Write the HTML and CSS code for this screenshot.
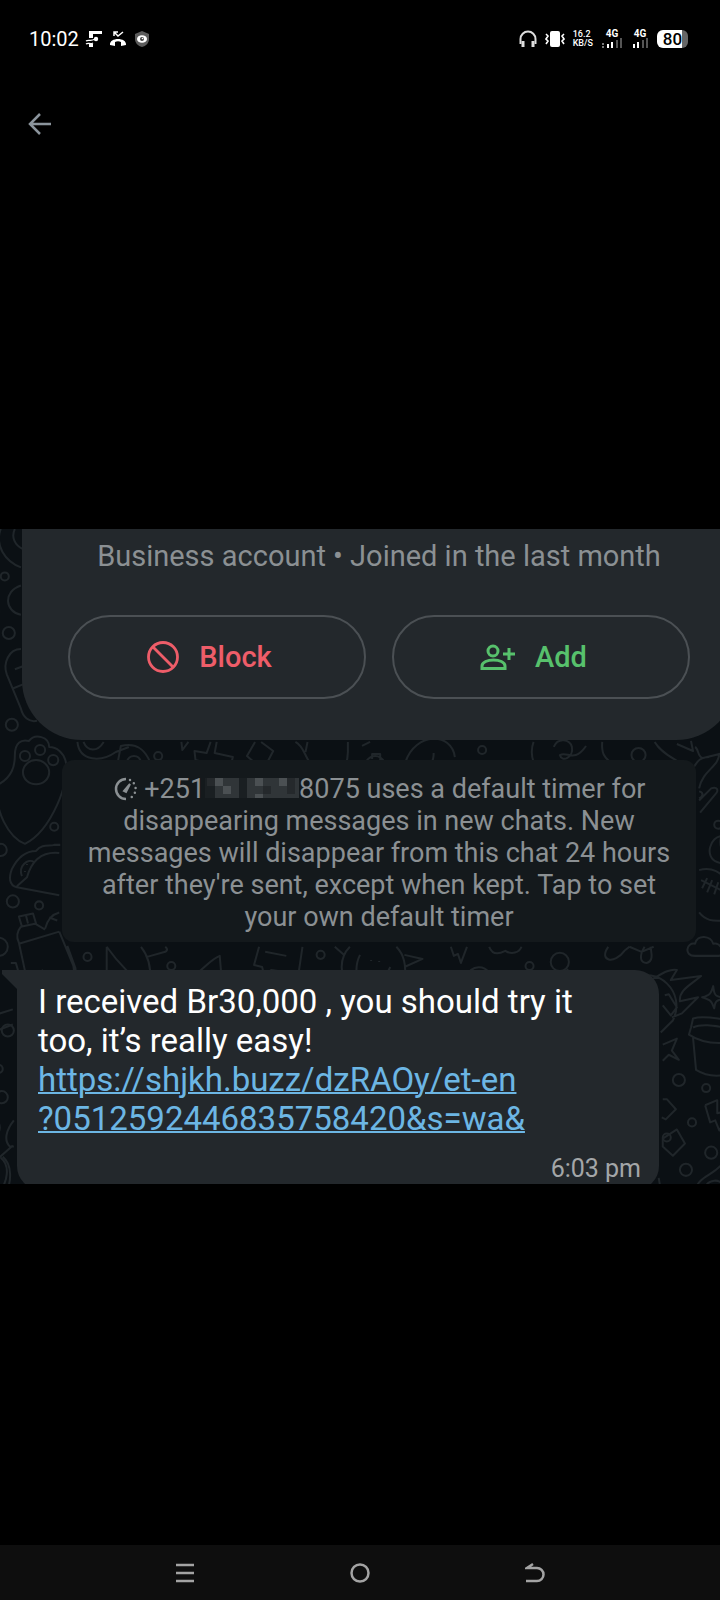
FILE: index.html
```
<!DOCTYPE html>
<html lang="en">
  <head>
    <meta charset="UTF-8" />
    <meta name="viewport" content="width=device-width, initial-scale=1.0" />
    <title>Photo</title>
    <link rel="stylesheet" href="styles.css">
  </head>
  <body>
    <header class="status-bar">
      <div class="status-left">
        <span class="clock">10:02</span>
        <svg width="18" height="18" viewBox="0 0 18 18" fill="#fff">
          <path d="M4 1h13v3H8v4H4zM4 14h4v3H4z" />
          <circle cx="11" cy="9" r="2.2" />
          <path d="M1 11c3-2 4 1 9-2M1 14c3-2 4 1 7-1" fill="none" stroke="#fff" stroke-width="1.3" />
        </svg>
        <svg width="18" height="18" viewBox="0 0 18 18" fill="none" stroke="#fff">
          <path d="M5 6V2h4M5 2l4 4 5-4" stroke-width="1.5" />
          <path d="M1 15c-1-8 17-8 16 0l-5 1v-4c-2-1-4-1-6 0v4z" fill="#fff" stroke="none" />
        </svg>
        <svg width="18" height="18" viewBox="0 0 18 18">
          <path d="M9 1l7 3v5c0 4-3 7-7 8-4-1-7-4-7-8V4z" fill="#5c5c5c" />
          <ellipse cx="9" cy="9" rx="5" ry="3.8" fill="#fff" />
          <circle cx="9" cy="9" r="2" fill="#444" />
          <circle cx="9.500" cy="8.500" r="0.800" fill="#fff" />
        </svg>
      </div>
      <div class="status-right">
        <svg width="18" height="18" viewBox="0 0 18 18" fill="none" stroke="#ddd">
          <path d="M1.5 14V9a7.500 7.500 0 0 1 15 0v5" stroke-width="2" />
          <path d="M4 11v6M14 11v6" stroke-width="3" />
        </svg>
        <svg width="20" height="18" viewBox="0 0 20 18" fill="none" stroke="#fff">
          <rect x="5" y="1" width="10" height="16" rx="2" fill="#fff" stroke="none" />
          <path d="M1 4l2 2-2 3 2 2-2 3M19 4l-2 2 2 3-2 2 2 3" stroke-width="1.600" />
        </svg>
        <span class="net-speed">16.2<br>KB/S</span>
        <div class="signal">
          <span>4G</span>
          <svg width="22" height="10" viewBox="0 0 22 10" fill="#fff">
            <path d="M1 5h2v2H1zM1 8h2v2H1z" fill="#777" />
            <path d="M6 6h2v4H6zM10 4h2v6h-2z" />
            <path d="M15 2h2v8h-2zM19 0h2v10h-2z" fill="#555" />
          </svg>
        </div>
        <div class="signal">
          <span>4G</span>
          <svg width="18" height="10" viewBox="0 0 18 10" fill="#fff">
            <path d="M2 6h2v4H2zM6 4h2v6H6z" />
            <path d="M11 2h2v8h-2zM15 0h2v10h-2z" fill="#555" />
          </svg>
        </div>
        <span class="battery">80</span>
      </div>
    </header>

    <div class="toolbar">
      <button class="icon-button" type="button" aria-label="Back">
        <svg width="24" height="24" viewBox="0 0 24 24" fill="none" stroke="#8b949c" stroke-width="2.500">
          <path d="M23 12H2M12 2L2 12l10 10" />
        </svg>
      </button>
    </div>

    <main class="viewer">
      <section class="chat">
        <svg class="doodles" viewBox="0 0 720 655" preserveAspectRatio="xMidYMin slice">
          <!-- left edge -->
          <path d="M4 0c-6 16 4 32 20 38M18 0c-4 8 0 16 8 20" />
          <circle cx="8" cy="47" r="4" />
          <path d="M24 56c-18 6-16 26 0 29M0 70c3 8 3 16 0 22" />
          <circle cx="12" cy="103" r="6" />
          <path d="M24 119c-12 0-18 14-14 25l14 34c2 8 8 14 16 12M16 158l10-4M18 139l8-3" />
          <circle cx="15" cy="194" r="6" />
          <!-- paw -->
          <path d="M0 254c16-8 18-20 18-30 0-12 6-16 14-14 6-8 20-4 20 6 8 0 14 6 16 13 6 20-14 70-40 83C12 306-2 280 0 254" />
          <circle cx="28" cy="225" r="5" /><circle cx="43" cy="219" r="5" /><circle cx="56" cy="229" r="5" />
          <ellipse cx="39" cy="241" rx="13" ry="12" />
          <circle cx="57" cy="295" r="4" /><circle cx="4" cy="318" r="6" />
          <!-- taco -->
          <path d="M62 363l-42-8c-8-2-8-10-5-18 6-12 14-18 24-18 6-8 14-4 18-6l6 0M62 321c-20-2-28 10-32 24l-10 9" />
          <path d="M25 344c-4-10 6-18 12-14M30 332v1M33 337v1M28 339v1" />
          <circle cx="16" cy="369" r="6" /><circle cx="42" cy="373" r="4" /><circle cx="2" cy="414" r="9" />
          <!-- bottle -->
          <path d="M22 384l14-3 3 10-14 3zM24 394c-4 5-5 10-2 16l8 37M38 391l10 6M22 411l40-12M29 383l2 8M62 380c-8 2-12 8-14 16M52 385l8 3M62 399l14 34q2 8-4 14M70 413l8 22q1 8-3 12" />
          <path d="M14 430l5 0 4 14M32 445l14-8" />
          <path d="M0 481l16-5M0 497l16-6" />
          <circle cx="11" cy="497" r="6" /><circle cx="2" cy="535" r="4" /><circle cx="5" cy="563" r="6" />
          <path d="M17 586c-8 10-10 20-4 26l4 0M0 585q6 8 0 16M0 625l16-14M4 623c10 8 6 24 0 32M6 622c10 8 8 26 4 33" />
          <!-- strip below the card -->
          <path d="M80 211c2 20 24 20 38 10l13-5M86 211c4 10 14 10 20 0M120 231l3-16c16-4 24 4 29 16M129 231c2-8 12-8 14 0" />
          <circle cx="160" cy="225" r="4" /><circle cx="186" cy="239" r="4" />
          <path d="M183 211l1 8 6-8M212 211l-4 11-12-2 1 9 8 2M218 211l-2 11 18 4-2 8-8-2M256 211l-8 14 16 14 10-19-12-9" />
          <path d="M296 211c12 6 8 24 28 30 14 4 24-4 24-20v-10M308 211l-2 10" />
          <path d="M362 215l8-4M366 231c4-8 14-8 18 0M372 228v-5h8v6M405 231c10-30 46-30 49-5M431 231c2-3 2-5 2-9" />
          <circle cx="481" cy="219" r="4" /><circle cx="516" cy="239" r="4" />
          <path d="M532 211c-3 8-2 14 0 20M552 216c4-10 16-8 18 0 2 10-10 16-12 8 8-4 14 8 26-9M600 211c-1 14 4 16 8 20" />
          <circle cx="636" cy="224" r="7" />
          <path d="M652 211c8 14 26 18 34 29 8-4 6-14 20-14M674 213l16 7-2-10M692 216c4 2 2 10 8 11l20-5M716 222c0 14-16 16-20 35" />
          <!-- right edge -->
          <path d="M696 269l12-12c6-2 8 2 4 6l-15 18M696 260c5 1 4 5 0 7" />
          <circle cx="715" cy="293" r="4" />
          <path d="M720 304c-14 0-19 22-6 26l6 2M718 304c-2 8 0 14 4 17" />
          <path d="M696 338c14-4 22 4 26 8M698 348l24 12M704 346l-5 10M709 348l-5 12M715 350l-4 12M696 380c8 10 16 8 26 8" />
          <path d="M692 423c-12 0-8-14 0-12 2-10 16-8 18 0 8-2 12 10 6 12z" />
          <!-- strip below the notice -->
          <path d="M109 414v33M109 414c14 20 22 24 28 33M143 414c8 10 10 20 9 33M149 424l18-5c4-2 0-5 0-5M188 447c14-6 22-20 33-24l2 24" />
          <circle cx="90" cy="424" r="4" /><circle cx="173" cy="433" r="4" /><circle cx="321" cy="422" r="4" />
          <path d="M260 414l-5 18 8 2 2 8 7-5 27 4 4-27M266 419l21 4M335 414l9 8M350 414c-8 8-10 20-6 33M360 422c-4 8-4 18-2 25" />
          <path d="M396 414c8 8 10 20 8 33M404 422l18 4-18 8M371 427v1M379 428v1M390 434l-4 8" />
          <path d="M450 414l3 9 4-2 3 9 6-16M488 414c4 10 12 6 16 4 6 4 14 2 16-4M436 447c6-10 16-8 20 0M465 444c6-14 20-10 22-5l6-1-4 6" />
          <circle cx="528" cy="433" r="4" /><circle cx="558" cy="429" r="9" /><path d="M565 436l6 8M593 446c2-4 6-4 8 0" />
          <path d="M606 414c-10 14 6 18 16 4l5-4M627 414l12 5 12-5M642 414c-6 10-4 16 2 16 8-2 4-12 4-16" />
          <!-- sun and the items right of the message -->
          <path d="M630 447c24-16 54 12 40 40l-12 12M648 447c8-4 18-12 26-10l-6 10 30-4c-12 10-22 14-21 25l18-4-16 16-10 4M662 462l4-1 8 13-6 8-8-10" />
          <path d="M710 453c1 10 2 10 12 12-9 2-10 2-11 10-3-8-3-8-12-11 8-2 9-4 11-11z" />
          <path d="M688 494l2-9c10-3 22 0 32 1M688 494l-2 7c12 8 24 9 36 8M690 494c8-4 20-2 32 0M690 504l3 32c8 5 16 7 28 5" />
          <path d="M660 511l14-6-5 12 7 9-10-5-6 6" />
          <circle cx="676" cy="546" r="6" /><circle cx="703" cy="554" r="4" /><circle cx="689" cy="588" r="4" />
          <path d="M660 565l4 0 9 10-10 10-4-2M702 571l12-5 0 13 8-2M702 571l5 17 5-2 4 10 6-10M660 604l14-9 8 14-12 12-10-9z" />
          <circle cx="664" cy="603" r="4" /><circle cx="708" cy="618" r="6" /><circle cx="683" cy="635" r="6" />
          <path d="M692 655c4-14 18-14 28-27M702 652c4-8 14-8 18-2M656 643l2 12" />
        </svg>

        <div class="thread">
          <div class="contact-card">
            <p class="contact-info">Business account • Joined in the last month</p>
            <div class="contact-actions">
              <button class="pill block" type="button">
                <svg width="32" height="32" viewBox="0 0 32 32" fill="none" stroke="currentColor" stroke-width="2.800">
                  <circle cx="16" cy="16" r="14.500" />
                  <path d="M6 6l20 20" />
                </svg>
                Block
              </button>
              <button class="pill add" type="button">
                <svg width="35" height="32" viewBox="0 0 35 32" fill="none" stroke="currentColor" stroke-width="3">
                  <circle cx="13" cy="10" r="5" />
                  <path d="M2 25v2.500h23V25c0-8-23-8-23 0zM29 7v12M23 13h12" />
                </svg>
                Add
              </button>
            </div>
          </div>

          <p class="notice">
            <svg class="timer" width="24" height="24" viewBox="0 0 24 24" fill="none" stroke="currentColor">
              <path d="M13 2a10 10 0 1 0 0 20" stroke-width="2.500" />
              <path d="M17 3a10 10 0 0 1 0 18" stroke-width="2.500" stroke-linecap="round" stroke-dasharray="0 5" />
              <path d="M11 14l6-7-4 8z" stroke-width="2" fill="currentColor" />
            </svg>
            +251<svg class="mosaic" width="94" height="20" viewBox="6 0 94 20" role="img" aria-label="hidden digits"><path d="M0 0h104v20H0z" fill="#1a1f22" /><path d="M16 0h24v20H16zM48 0h56v20H48z" fill="#303538" /><path d="M16 0h8v8h-8zM24 8h8v8h-8zM56 0h8v8h-8zM80 0h8v8h-8zM56 16h8v4h-8z" fill="#4b5053" /><path d="M8 0h8v8H8zM64 8h8v8h-8zM88 0h8v16h-8z" fill="#25292c" /></svg>8075 uses a default timer for disappearing messages in new chats. New messages will disappear from this chat 24 hours after they're sent, except when kept. Tap to set your own default timer
          </p>

          <article class="message">
            <p class="message-text">I received Br30,000 , you should try it too, it’s really easy!<br><a href="#">https://shjkh.buzz/dzRAOy/et-en<wbr><span class="query">?0512592446835758420&amp;s=wa&amp;</span></a></p>
            <time class="message-time">6:03 pm</time>
          </article>
        </div>
      </section>
    </main>

    <nav class="nav-bar">
      <button class="icon-button" type="button" aria-label="Recent apps">
        <svg width="20" height="22" viewBox="0 0 20 22" fill="none" stroke="#a3a3a3" stroke-width="2.500">
          <path d="M1 3h18M1 11h18M1 19h18" />
        </svg>
      </button>
      <button class="icon-button" type="button" aria-label="Home">
        <svg width="20" height="22" viewBox="0 0 20 22" fill="none" stroke="#a3a3a3" stroke-width="2.500">
          <circle cx="10" cy="11" r="8.500" />
        </svg>
      </button>
      <button class="icon-button" type="button" aria-label="Back">
        <svg width="20" height="22" viewBox="0 0 20 22" fill="none" stroke="#a3a3a3" stroke-width="2.500">
          <path d="M1 19h11a6.500 6.500 0 0 0 0-13H2l6-4" />
        </svg>
      </button>
    </nav>
  </body>
</html>
```

FILE: styles.css
```
* {
  box-sizing: border-box;
}

body {
  display: flex;
  flex-direction: column;
  min-height: 100vh;
  margin: 0;
  background-color: #000;
  color: #fff;
  font-family: Roboto, "Liberation Sans", sans-serif;
}

p {
  margin: 0;
}

svg {
  flex: none;
}

button {
  padding: 0;
  border: none;
  background: none;
  font-family: inherit;
  cursor: pointer;
}

.status-bar {
  display: flex;
  justify-content: space-between;
  align-items: center;
  height: 78px;
  padding: 0 32px 0 29px;
}

.status-left,
.status-right {
  display: flex;
  align-items: center;
  gap: 6px;
}

.status-right {
  gap: 8px;
}

.clock {
  font-size: 20px;
}

.net-speed {
  font-size: 9px;
  font-weight: 500;
  line-height: 9px;
}

.signal {
  display: flex;
  flex-direction: column;
  align-items: center;
  font-size: 10px;
  font-weight: 700;
  line-height: 8px;
}

.battery {
  width: 31px;
  height: 18px;
  border-radius: 6px;
  background: linear-gradient(to right, #fff 80%, #666 80%);
  color: #000;
  font-size: 17px;
  font-weight: 500;
  line-height: 19px;
  text-align: center;
}

.toolbar {
  display: flex;
  padding: 34px 28px;
}

.icon-button {
  display: flex;
}

.viewer {
  flex: 1;
  display: flex;
  flex-direction: column;
  justify-content: center;
  padding-bottom: 2px;
}

/* the doodles and the thread share one grid cell */
.chat {
  display: grid;
  height: 655px;
  overflow: hidden;
  background-color: #0b1014;
}

.doodles,
.thread {
  grid-area: 1 / 1;
  min-width: 0;
}

.doodles {
  width: 100%;
  height: 100%;
  fill: none;
  stroke: #20262a;
  stroke-width: 2;
  stroke-linejoin: round;
}

.contact-card {
  margin: 0 -16px 20px 22px;
  padding: 10px 46px 41px;
  border-radius: 0 0 60px 60px;
  background-color: #23282c;
}

.contact-info {
  color: #8b9093;
  font-size: 29px;
  line-height: 34px;
  text-align: center;
}

.contact-actions {
  display: grid;
  grid-template-columns: 1fr 1fr;
  gap: 26px;
  margin-top: 42px;
}

.pill {
  display: flex;
  justify-content: center;
  align-items: center;
  gap: 20px;
  height: 84px;
  padding-right: 15px;
  border: 2px solid #4b5054;
  border-radius: 42px;
  font-size: 29px;
  font-weight: 500;
}

.block {
  color: #ee5d69;
}

.add {
  color: #57c16c;
}

.notice {
  margin: 0 24px 28px 62px;
  padding: 13px 24px 9px;
  border-radius: 12px;
  background-color: #14191c;
  color: #8b9093;
  font-size: 27px;
  line-height: 32px;
  text-align: center;
}

.timer {
  margin-right: 1px;
  vertical-align: -3px;
}

.mosaic {
  vertical-align: 0;
}

.message {
  position: relative;
  display: flex;
  flex-direction: column;
  margin: 0 61px 0 17px;
  padding: 12px 18px 6px 21px;
  border-radius: 0 24px 24px 24px;
  background-color: #23282c;
}

/* tail of the bubble */
.message::before {
  content: "";
  position: absolute;
  top: 0;
  left: -15px;
  width: 16px;
  height: 20px;
  background-color: #23282c;
  clip-path: polygon(0 0, 100% 0, 100% 100%, 0 20%);
}

.message-text {
  padding-right: 32px;
  font-size: 33px;
  line-height: 39px;
}

.message-text a {
  color: #6cb6e4;
  text-decoration-thickness: 2px;
}

.query {
  display: inline;
  white-space: nowrap;
}

.message-time {
  align-self: flex-end;
  margin-top: 16px;
  color: #a3a6a8;
  font-size: 25px;
  line-height: 30px;
}

.nav-bar {
  display: flex;
  justify-content: space-around;
  align-items: center;
  height: 55px;
  padding: 0 98px;
  background-color: #0e0e0e;
}
```
